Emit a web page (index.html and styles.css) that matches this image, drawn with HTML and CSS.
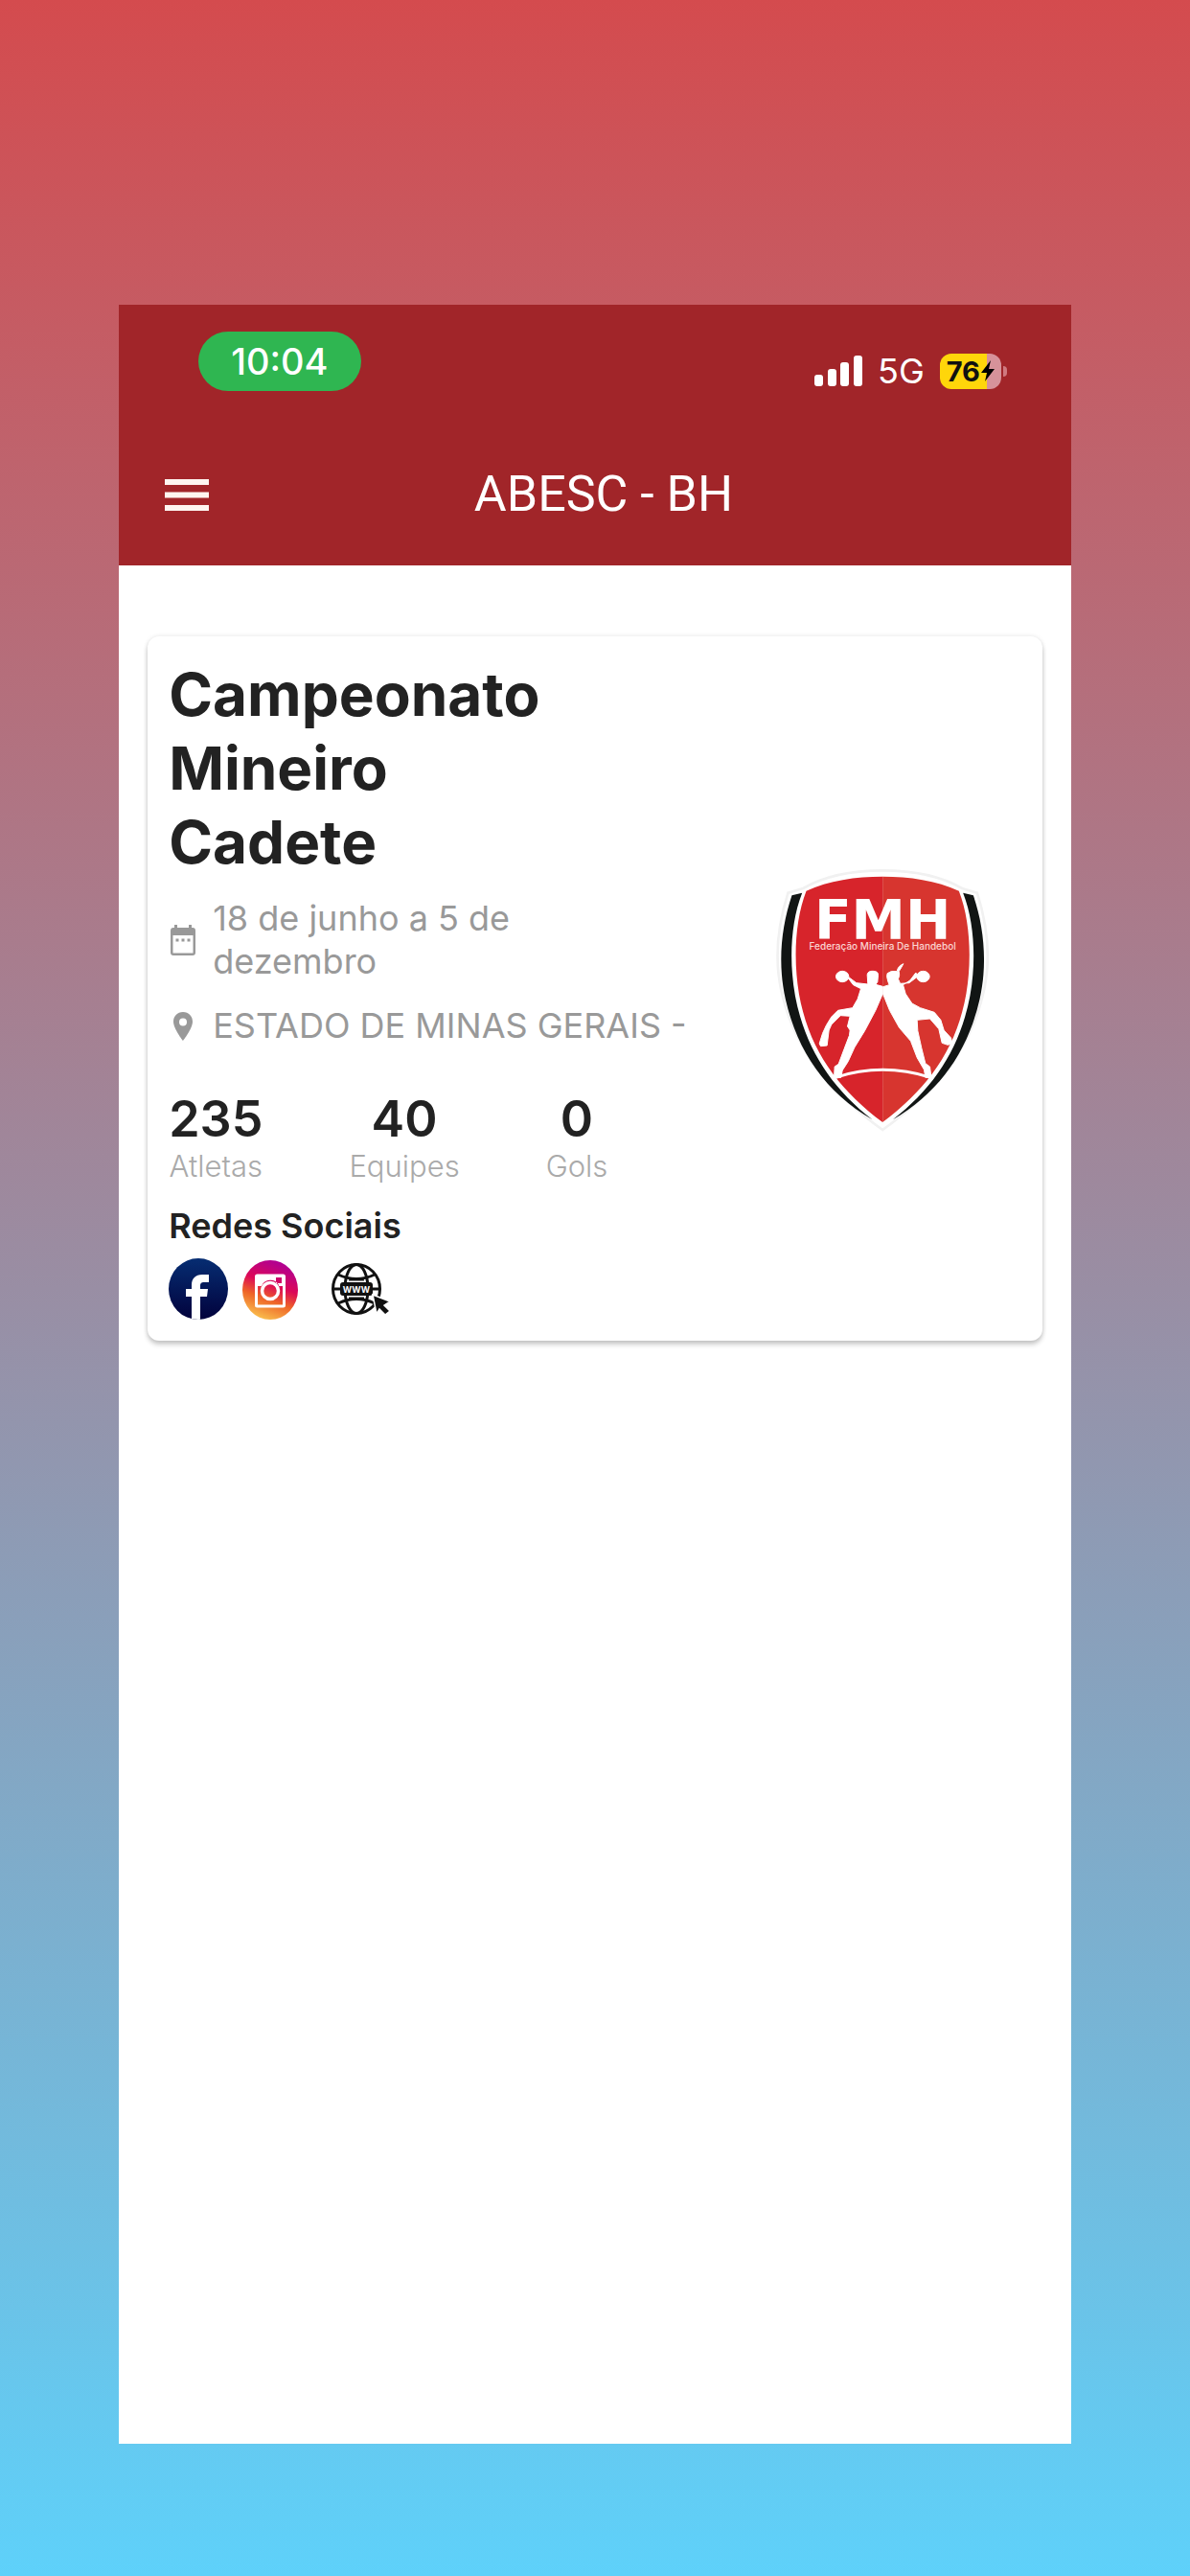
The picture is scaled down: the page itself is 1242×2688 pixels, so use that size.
FILE: index.html
```html
<!DOCTYPE html>
<html lang="pt-BR">
<head>
    <meta charset="UTF-8">
    <meta name="viewport" content="width=device-width, initial-scale=1.0">
    <title>ABESC - BH</title>
    <link rel="stylesheet" href="styles.css">
</head>
<body>
    <div class="screen">
        <header class="header">
            <div class="status">
                <span class="time">10:04</span>
                <div class="status-icons">
                    <svg class="signal" viewBox="0 0 50 32" fill="#fff">
                        <rect x="0" y="20" width="9" height="12" rx="3"/>
                        <rect x="14" y="14" width="9" height="18" rx="3"/>
                        <rect x="27" y="7" width="9" height="25" rx="3"/>
                        <rect x="41" y="0" width="9" height="32" rx="3"/>
                    </svg>
                    <span class="network">5G</span>
                    <div class="battery">
                        <span class="level">76</span>
                        <svg class="bolt" viewBox="0 0 14 22"><path d="M10 0 0 13h6L4 22 14 9H8z"/></svg>
                    </div>
                </div>
            </div>
            <div class="toolbar">
                <button class="menu" type="button" aria-label="Menu">
                    <svg viewBox="0 0 46 33" fill="#fff5f0"><path d="M0 0h46v6H0zM0 13.500h46v6H0zM0 27h46v6H0z"/></svg>
                </button>
                <h1>ABESC - BH</h1>
            </div>
        </header>

        <main class="content">
            <article class="card">
                <div class="info">
                    <h2>Campeonato Mineiro Cadete</h2>
                    <p class="detail date">
                        <svg viewBox="0 0 26 32" fill="#999">
                            <path fill-rule="evenodd" d="M3 3h1V0h3v3h12V0h3v3h1a3 3 0 0 1 3 3v23a3 3 0 0 1-3 3H3a3 3 0 0 1-3-3V6a3 3 0 0 1 3-3zM2.500 11v18.500h21V11z"/>
                            <path d="M5.500 14.500h3v3h-3zM11.500 14.500h3v3h-3zM17.500 14.500h3v3h-3z"/>
                        </svg>
                        <span>18 de junho a 5 de dezembro</span>
                    </p>
                    <p class="detail">
                        <svg viewBox="0 0 26 32" fill="#999"><path fill-rule="evenodd" d="M13 1C7 1 3 5.500 3 11c0 7.500 10 20 10 20s10-12.500 10-20C23 5.500 19 1 13 1zm0 6.500a4 4 0 1 1 0 8 4 4 0 0 1 0-8z"/></svg>
                        <span>ESTADO DE MINAS GERAIS -</span>
                    </p>
                    <dl class="stats">
                        <div><dd>235</dd><dt>Atletas</dt></div>
                        <div><dd>40</dd><dt>Equipes</dt></div>
                        <div><dd>0</dd><dt>Gols</dt></div>
                    </dl>
                    <h3>Redes Sociais</h3>
                    <div class="social">
                        <a href="#" aria-label="Facebook">
                            <svg viewBox="0 0 62 64">
                                <defs>
                                    <linearGradient id="fb" x1="0" y1="0" x2="0" y2="1"><stop offset="0" stop-color="#062d72"/><stop offset="1" stop-color="#02023c"/></linearGradient>
                                    <clipPath id="fbClip"><ellipse cx="31" cy="32" rx="31" ry="32"/></clipPath>
                                </defs>
                                <ellipse cx="31" cy="32" rx="31" ry="32" fill="url(#fb)"/>
                                <path clip-path="url(#fbClip)" fill="#fff" d="M24 64V40h-6v-8h6v-4c0-7 4-11 11-11h7v8h-5c-3 0-4 1-4 4v3h8l-1 8h-7v24z"/>
                            </svg>
                        </a>
                        <a href="#" aria-label="Instagram">
                            <svg viewBox="0 0 60 64">
                                <defs>
                                    <linearGradient id="ig" x1=".65" y1="0" x2=".3" y2="1"><stop offset="0" stop-color="#ad0097"/><stop offset=".4" stop-color="#dc0857"/><stop offset=".65" stop-color="#ee6427"/><stop offset="1" stop-color="#fac550"/></linearGradient>
                                </defs>
                                <ellipse cx="30" cy="33" rx="29" ry="31" fill="url(#ig)"/>
                                <rect x="15.500" y="18" width="29" height="32" rx="1" fill="none" stroke="#fff" stroke-width="3"/>
                                <path fill="#fff" fill-rule="evenodd" d="M15 17h30v12h-6v-1a10 10 0 0 0-18 1h-6zM36 20v6h6v-6z"/>
                                <circle cx="30" cy="34" r="8.500" fill="none" stroke="#fff" stroke-width="3.500"/>
                            </svg>
                        </a>
                        <a class="site" href="#" aria-label="Site">
                            <svg viewBox="0 0 62 54">
                                <g fill="none" stroke="#111" stroke-width="3">
                                    <ellipse cx="26" cy="27" rx="24.500" ry="25.500"/>
                                    <ellipse cx="26" cy="27" rx="12" ry="25.500"/>
                                    <path d="M7 12q19 9 38 0M7 42q19-9 38 0M1 27h50M18 17h16M18 37h16"/>
                                </g>
                                <rect x="9" y="20" width="34" height="14" rx="3" fill="#111"/>
                                <text x="26" y="30.500" text-anchor="middle" font-size="9" font-weight="700" fill="#fff">WWW</text>
                                <path fill="#111" stroke="#fff" stroke-width="1.500" d="M43 33l18 7-6 4 6 6-5 4-6-6-3 5z"/>
                            </svg>
                        </a>
                    </div>
                </div>
                <div class="club">
                    <svg viewBox="0 0 770 900" role="img" aria-label="Federação Mineira De Handebol">
                        <g stroke="#f1f1f1" stroke-width="8" fill="#fff">
                            <path d="M384 52C290 52 200 70 135 108L88 122C52 235 45 350 72 450C115 620 225 750 384 864C543 750 653 620 696 450C723 350 716 235 680 122L633 108C568 70 478 52 384 52z"/>
                        </g>
                        <path fill="#111514" d="M100 130l32-8C88 235 90 390 126 510C164 640 240 745 352 832C205 745 118 620 80 455C55 345 66 230 100 130z"/>
                        <path fill="#111514" d="M668 130l-32-8C680 235 678 390 642 510C604 640 528 745 416 832C563 745 650 620 688 455C713 345 702 230 668 130z"/>
                        <path fill="#d7242b" d="M384 71C300 71 215 83 145 116C102 225 104 385 135 495C174 640 260 747 384 840z"/>
                        <path fill="#d7352f" d="M384 71C468 71 553 83 623 116C666 225 664 385 633 495C594 640 508 747 384 840z"/>
                        <text class="initials" x="384" y="267" text-anchor="middle" fill="#fff">FMH</text>
                        <text x="384" y="300" text-anchor="middle" font-size="30" font-weight="500" fill="#fbd5d3">Federação Mineira De Handebol</text>
                        <!-- players -->
                        <g fill="#fff" stroke="#fff" stroke-width="3" stroke-linejoin="round">
                            <ellipse cx="258" cy="384" rx="20" ry="17"/>
                            <path d="M268 392l10-6 24 18 36 4-2-30q2-12 18-11 16 0 16 12l-2 22-6 8 22 6v24L362 490l-34 64-32 52-20 44-18 28-4 22-22 2 2-36 12-8 18-48 16-42 2-16-8-12 8-32-30-2-28 28-8 18-6 48-20 2-4-8 10-32 12-26 16-26 20-20 46-8 16-28 10-32-24-12-18-24z"/>
                            <ellipse cx="511" cy="384" rx="20" ry="17"/>
                            <path d="M501 392l-10-6-24 18-28 2-6-14q6-14 2-24 8-12 14-24-18 8-20 24-18-4-30 6-4 8 2 26l4 10-19 6v24l20 50 30 54 36 42 20 52 22 38 4 24 18-2-4-32-14-10-12-48-12-54-2-34 40-4 28 32 10 44 18 6 14-4-4-18-22-24-10-32-20-24-44-14-26-14-20-30-8-28 22-14 18-24z"/>
                        </g>
                        <path fill="none" stroke="#fff" stroke-width="9" d="M236 700Q384 652 534 700"/>
                    </svg>
                </div>
            </article>
        </main>
    </div>
</body>
</html>
```

FILE: styles.css
```css
* { box-sizing: border-box; margin: 0; padding: 0; }
body { min-height: 100vh; display: flex; justify-content: center; padding: 318px 0 138px; font-family: Inter, 'Liberation Sans', sans-serif; background: linear-gradient(#d44b4e, #5ed1fa); color: #222; }
svg { display: block; }
.screen { width: 80%; background: #fff; }

.header { background: #a12529; color: #fff; padding-top: 28px; }
.status { display: flex; justify-content: space-between; align-items: flex-end; padding: 0 73px 0 83px; }
.time { background: #2fb651; border-radius: 31px; line-height: 62px; padding: 0 34px; font-size: 38px; font-weight: 500; }
.status-icons { display: flex; align-items: center; gap: 16px; height: 42px; }
.signal { width: 50px; height: 32px; }
.network { font-size: 36px; line-height: 42px; }
.battery { position: relative; display: flex; align-items: center; justify-content: center; gap: 1px; width: 64px; height: 37px; border-radius: 12px; background: linear-gradient(90deg, #ffd60a 76%, #d6929a 76%); color: #111; }
.battery::after { content: ""; position: absolute; right: -6px; top: 13px; width: 4px; height: 11px; border-radius: 0 4px 4px 0; background: #cf7a80; }
.level { font-size: 29px; line-height: 37px; font-weight: 700; }
.bolt { width: 14px; height: 22px; }
.toolbar { display: grid; grid-template-columns: 1fr auto 1fr; align-items: center; height: 182px; padding: 34px 30px 0 48px; }
.menu { justify-self: start; border: 0; background: none; cursor: pointer; }
.menu svg { width: 46px; height: 33px; }
.toolbar h1 { font-family: Roboto, 'Liberation Sans', sans-serif; font-size: 52px; font-weight: 400; line-height: 64px; }

.content { padding: 74px 30px; }
.card { display: grid; grid-template-columns: 600px 1fr; align-items: center; border-radius: 12px; background: #fff; box-shadow: 0 4px 5px rgba(0, 0, 0, 0.2), 0 0 5px rgba(0, 0, 0, 0.1); }
.info { padding: 22px; }
.info h2 { max-width: 440px; margin-bottom: 19px; font-size: 62px; line-height: 77px; font-weight: 700; }
.detail { display: flex; align-items: center; gap: 16px; margin-bottom: 22px; color: #999; font-size: 36px; line-height: 45px; white-space: nowrap; }
.detail svg { flex: none; width: 30px; height: 32px; }
.date { max-width: 440px; white-space: normal; }
.stats { display: flex; gap: 90px; margin: 45px 0 21px; text-align: center; }
.stats div { display: flex; flex-direction: column; }
.stats dd { font-size: 52px; line-height: 60px; font-weight: 600; }
.stats dt { font-size: 31px; line-height: 38px; color: #aaa; font-weight: 300; }
.info h3 { margin-bottom: 12px; font-size: 36px; line-height: 44px; font-weight: 600; }
.social { display: flex; align-items: center; gap: 13px; }
.social svg { width: 62px; height: 64px; }
.site { margin-left: 20px; }
.club { justify-self: center; padding-top: 18px; }
.club svg { width: 257px; height: 300px; }
.initials { font-family: 'DejaVu Sans', sans-serif; font-size: 170px; font-weight: 700; }
```
